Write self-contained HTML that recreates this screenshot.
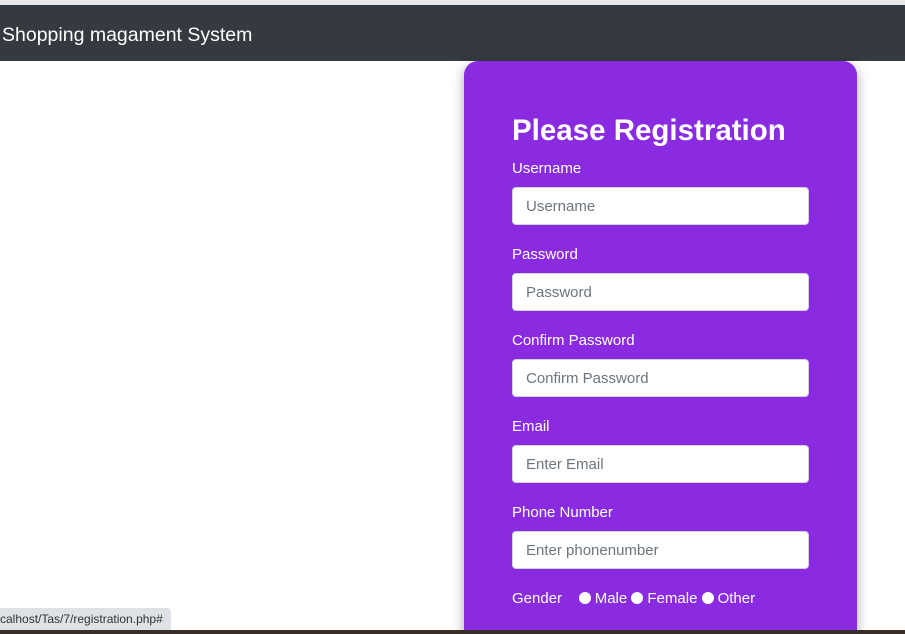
<!DOCTYPE html>
<html style="overflow:hidden;height:634px"><head><style>
body{margin:0;width:905px;height:634px;overflow:hidden;background:#fff;font-family:"Liberation Sans",sans-serif;position:relative}
.top{position:absolute;left:0;top:0;width:905px;height:5px;background:#e8e8e8}
.nav{position:absolute;left:0;top:5px;width:905px;height:56px;background:#343a40;color:#fff;font-size:19.5px;line-height:60px;padding-left:2px;box-sizing:border-box}
.card{position:absolute;left:464px;top:61px;width:393px;height:573px;background:#8a2be2;border-radius:14px 14px 0 0;box-shadow:0 4px 12px rgba(0,0,0,.35);color:#fff}
h1{position:absolute;left:48px;top:50px;margin:0;font-size:29.5px;font-weight:bold;line-height:40px}
.lab{position:absolute;left:48px;font-size:15px;line-height:20px;margin-top:1px}
.inp{position:absolute;left:48px;width:297px;height:38px;box-sizing:border-box;background:#fff;border:1px solid #ced4da;border-radius:4px;color:#6c757d;font-size:15px;line-height:38px;padding-left:13px}
.r{display:inline-block;width:12px;height:12px;border-radius:50%;background:#fff;vertical-align:-1px;margin:0 4px 0 0}
.status{position:absolute;left:0;top:608px;height:22px;padding:0 8px 0 0;background:#dee1e6;border-radius:0 4px 0 0;font-size:12px;line-height:22px;color:#333}
.bot{position:absolute;left:0;top:630px;width:905px;height:4px;background:#3a2f28}
</style></head><body>
<div class="top"></div>
<div class="nav">Shopping magament System</div>
<div class="card">
<h1>Please Registration</h1>
<div class="lab" style="top:97px">Username</div><div class="inp" style="top:126px">Username</div>
<div class="lab" style="top:183px">Password</div><div class="inp" style="top:212px">Password</div>
<div class="lab" style="top:269px">Confirm Password</div><div class="inp" style="top:298px">Confirm Password</div>
<div class="lab" style="top:355px">Email</div><div class="inp" style="top:384px">Enter Email</div>
<div class="lab" style="top:441px">Phone Number</div><div class="inp" style="top:470px">Enter phonenumber</div>
<div class="lab" style="top:527px">Gender &nbsp;&nbsp;&nbsp;<span class="r"></span>Male <span class="r"></span>Female <span class="r"></span>Other</div>
</div>
<div class="status">calhost/Tas/7/registration.php#</div>
<div class="bot"></div>
</body></html>
